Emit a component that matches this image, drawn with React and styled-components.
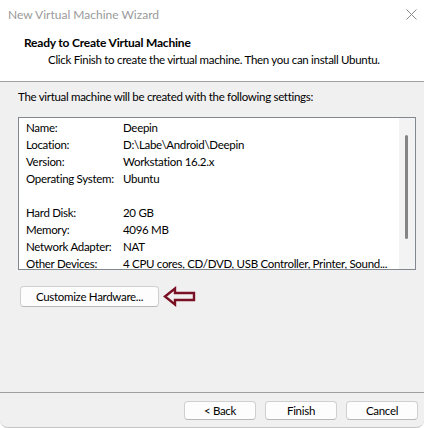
import React from "react";
import styled, { createGlobalStyle } from "styled-components";

const Global = createGlobalStyle`
  html, body { margin: 0; padding: 0; background: #ffffff; }
  body { font-family: Lato, "Liberation Sans", sans-serif; }
`;

const Window = styled.div`
  width: 424px;
  height: 428px;
  box-sizing: border-box;
  display: flex;
  flex-direction: column;
  background: #f0f0f0;
  border-bottom: 1px solid #c4c4c4;
  border-radius: 0 0 8px 8px;
  overflow: hidden;
  font-size: 11.5px;
  letter-spacing: -0.3px;
  color: #000;
`;

const TitleBar = styled.div`
  height: 28px;
  display: flex;
  align-items: center;
  justify-content: space-between;
  padding: 0 7px 0 8px;
  background: #ffffff;
  color: #9a9a9a;
  font-size: 12px;
  letter-spacing: 0;
`;

const Header = styled.div`
  background: #ffffff;
  padding: 6px 0 13px 24px;
  border-bottom: 1px solid #a0a0a0;
  line-height: 17px;
  white-space: nowrap;
`;

const HeaderTitle = styled.div`
  font-weight: 700;
  font-size: 12px;
  letter-spacing: -0.2px;
`;

const HeaderSub = styled.div`
  padding-left: 24px;
`;

const Body = styled.div`
  flex: 1;
  padding: 6px 8px 0 18px;
  line-height: 17px;
`;

const Intro = styled.div`
  white-space: nowrap;
`;

const SummaryBox = styled.div`
  margin-top: 12px;
  height: 153px;
  box-sizing: border-box;
  border: 1px solid #828790;
  background: #ffffff;
  display: flex;
  overflow: hidden;
`;

const Rows = styled.div`
  flex: 1;
  padding: 1px 0 0 7px;
  overflow: hidden;
`;

const Row = styled.div`
  display: flex;
  align-items: center;
  height: 17px;
  line-height: 12px;
  white-space: nowrap;
`;

const Label = styled.span`
  width: 97px;
  flex: none;
`;

const Value = styled.span``;

const ScrollTrack = styled.div`
  width: 16px;
  flex: none;
  background: #f3f3f3;
  position: relative;
`;

const ScrollThumb = styled.div`
  position: absolute;
  left: 6px;
  top: 17px;
  width: 3px;
  height: 104px;
  border-radius: 2px;
  background: #858585;
`;

const CustomRow = styled.div`
  margin-top: 16px;
  padding-left: 2px;
  display: flex;
  align-items: center;
  gap: 4px;
`;

const Button = styled.button`
  font: inherit;
  letter-spacing: inherit;
  color: #000;
  width: ${(p) => p.$w}px;
  height: ${(p) => p.$h}px;
  padding: 0;
  background: #fdfdfd;
  border: 1px solid #d0d0d0;
  border-bottom-color: #b8b8b8;
  border-radius: 4px;
  line-height: 1;
  display: flex;
  align-items: center;
  justify-content: center;
`;

const Footer = styled.div`
  border-top: 1px solid #a0a0a0;
  height: 35px;
  box-sizing: border-box;
  padding: 8px 6px 0 0;
  display: flex;
  justify-content: flex-end;
  gap: 9px;
`;

const rows = [
  ["Name:", "Deepin"],
  ["Location:", "D:\\Labe\\Android\\Deepin"],
  ["Version:", "Workstation 16.2.x"],
  ["Operating System:", "Ubuntu"],
  ["", ""],
  ["Hard Disk:", "20 GB"],
  ["Memory:", "4096 MB"],
  ["Network Adapter:", "NAT"],
  ["Other Devices:", "4 CPU cores, CD/DVD, USB Controller, Printer, Sound..."],
];

export default function App() {
  return (
    <>
      <Global />
      <Window>
        <TitleBar>
          <span>New Virtual Machine Wizard</span>
          <svg width="11" height="11" viewBox="0 0 11 11">
            <path d="M0.5 0.5 L10.5 10.5 M10.5 0.5 L0.5 10.5" stroke="#8a8a8a" strokeWidth="1" fill="none" />
          </svg>
        </TitleBar>
        <Header>
          <HeaderTitle>Ready to Create Virtual Machine</HeaderTitle>
          <HeaderSub>Click Finish to create the virtual machine. Then you can install Ubuntu.</HeaderSub>
        </Header>
        <Body>
          <Intro>The virtual machine will be created with the following settings:</Intro>
          <SummaryBox>
            <Rows>
              {rows.map(([l, v], i) => (
                <Row key={i}>
                  <Label>{l}</Label>
                  <Value>{v}</Value>
                </Row>
              ))}
            </Rows>
            <ScrollTrack>
              <ScrollThumb />
            </ScrollTrack>
          </SummaryBox>
          <CustomRow>
            <Button $w={139} $h={21}>Customize Hardware...</Button>
            <svg width="33" height="21" viewBox="0 0 33 21">
              <path
                d="M2 10.5 L12 2.5 L12 7 L31 7 L31 14 L12 14 L12 18.5 Z"
                fill="none"
                stroke="#7a1024"
                strokeWidth="2.4"
                strokeLinejoin="miter"
              />
            </svg>
          </CustomRow>
        </Body>
        <Footer>
          <Button $w={72} $h={19}>&lt; Back</Button>
          <Button $w={72} $h={19}>Finish</Button>
          <Button $w={72} $h={19}>Cancel</Button>
        </Footer>
      </Window>
    </>
  );
}
